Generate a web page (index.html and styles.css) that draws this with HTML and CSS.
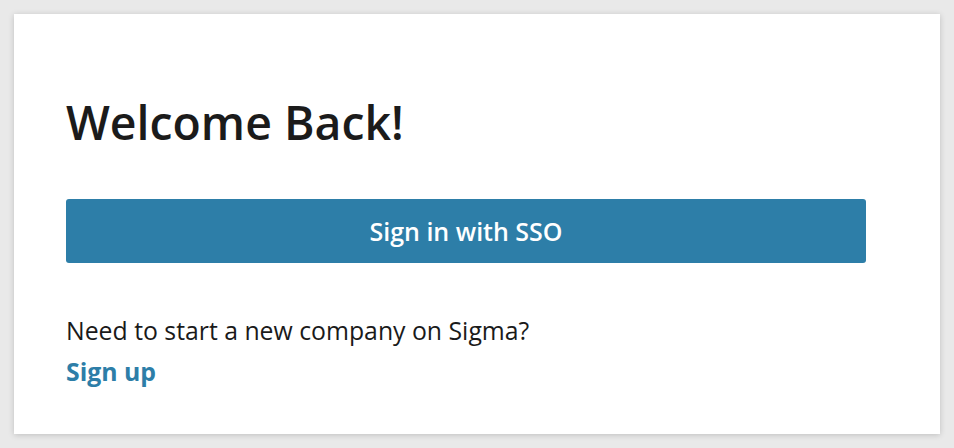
FILE: index.html
```html
<!DOCTYPE html>
<html lang="en">
<head>
<meta charset="utf-8">
<title>Welcome Back</title>
<link rel="stylesheet" href="styles.css">
</head>
<body>
<main class="card">
  <h1 class="title">Welcome Back!</h1>
  <button class="sso-btn" type="button">Sign in with SSO</button>
  <p class="prompt">Need to start a new company on Sigma?</p>
  <a class="signup" href="#">Sign up</a>
</main>
</body>
</html>
```

FILE: styles.css
```css
html, body {
  margin: 0;
  padding: 0;
}
body {
  background: #e9e9e9;
  font-family: "Open Sans", "Noto Sans", sans-serif;
  color: #1a1a1a;
  padding: 14px;
  height: 448px;
  box-sizing: border-box;
}
.card {
  width: 926px;
  height: 420px;
  box-sizing: border-box;
  background: #ffffff;
  box-shadow: 0 1px 6px rgba(0, 0, 0, 0.18);
  padding: 82px 74px 0 52px;
  display: flex;
  flex-direction: column;
  align-items: flex-start;
}
.title {
  margin: 0;
  font-size: 46.4px;
  line-height: 52px;
  font-weight: 600;
  color: #1b1b1b;
}
.sso-btn {
  margin-top: 51px;
  width: 800px;
  height: 64px;
  padding: 0;
  border: 0;
  border-radius: 3px;
  background: #2d7ea8;
  color: #ffffff;
  font-family: inherit;
  font-size: 25px;
  font-weight: 600;
}
.prompt {
  margin: 51px 0 0;
  font-size: 24.8px;
  line-height: 32px;
}
.signup {
  margin-top: 9px;
  font-size: 24.8px;
  line-height: 32px;
  font-weight: 700;
  color: #2d7ea8;
  text-decoration: none;
}
```
